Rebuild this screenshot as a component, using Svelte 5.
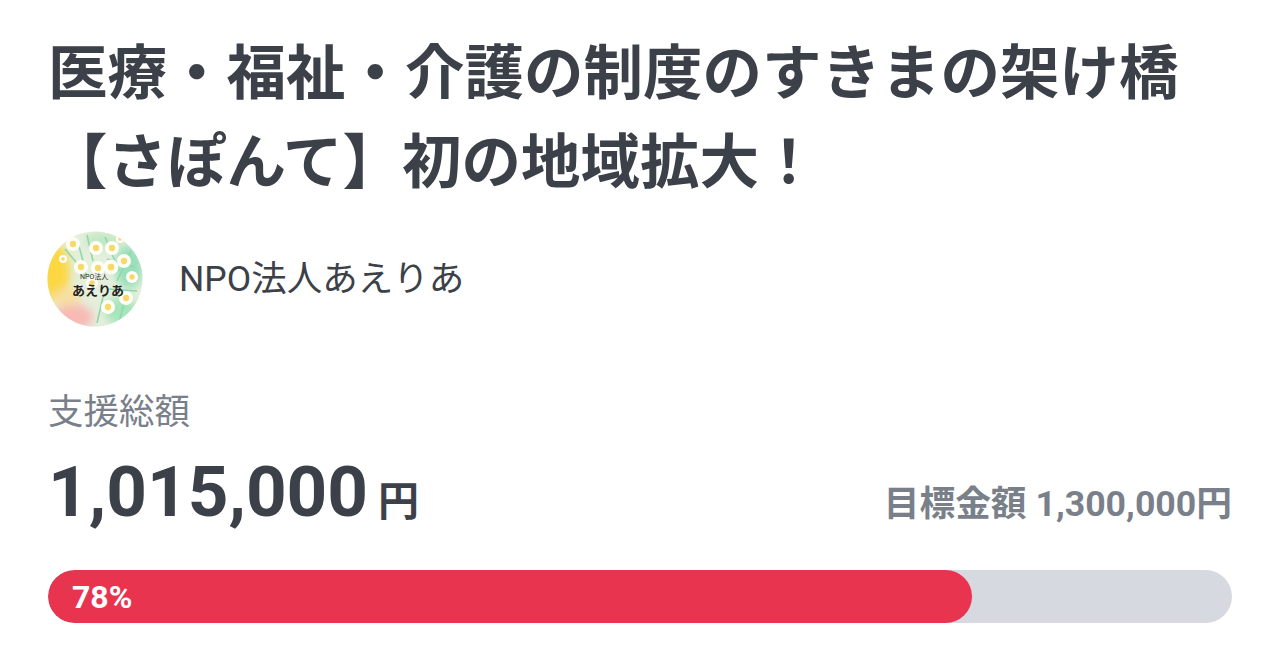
<script>
  const flowers = [[26,13,7],[49,17,7],[65,17,7],[77,30,7],[34,36,7],[51,37,7],[64,36,7.5],[85,46,6],[45,52,6],[79,67,7],[61,76,7],[73,8,4],[16,28,4]];
  const leaves = ["M40 4 L46 30","M58 6 L72 40","M84 20 L70 50","M90 60 L62 58","M72 92 L80 60","M50 92 L56 66","M18 18 L40 44","M30 8 L36 30","M88 36 L60 28"];
</script>

<main class="page">
  <h1>医療・福祉・介護の制度のすきまの架け橋<br />【さぽんて】初の地域拡大！</h1>
  <div class="org">
    <div class="avatar">
      <svg viewBox="0 0 96 96" width="96" height="96">
        <defs>
          <clipPath id="c"><circle cx="48" cy="48" r="47.5" /></clipPath>
          <filter id="b" x="-30%" y="-30%" width="160%" height="160%"><feGaussianBlur stdDeviation="4" /></filter>
          <filter id="s"><feGaussianBlur stdDeviation="0.6" /></filter>
        </defs>
        <g clip-path="url(#c)">
          <rect width="96" height="96" fill="#e4efdc" />
          <g filter="url(#b)">
            <ellipse cx="8" cy="42" rx="15" ry="30" fill="#fcd742" />
            <ellipse cx="26" cy="86" rx="20" ry="13" fill="#f8b9b4" />
            <ellipse cx="20" cy="66" rx="14" ry="9" fill="#f8dfa0" />
            <ellipse cx="82" cy="36" rx="14" ry="22" fill="#98dfba" />
            <ellipse cx="74" cy="80" rx="16" ry="14" fill="#a4e5bb" />
            <ellipse cx="56" cy="10" rx="18" ry="8" fill="#bfe8c2" />
          </g>
          <g filter="url(#s)">
            {#each leaves as d}
              <path {d} stroke="#8fd8ae" stroke-width="1.6" fill="none" />
            {/each}
            {#each flowers as [x, y, r]}
              <circle cx={x} cy={y} r={r} fill="#fffef6" />
              <circle cx={x} cy={y} r={r * 0.45} fill="#f7d868" />
            {/each}
          </g>
        </g>
      </svg>
      <span class="logo-small">NPO法人</span>
      <span class="logo-big">あえりあ</span>
    </div>
    <span class="org-name">NPO法人あえりあ</span>
  </div>
  <div class="label">支援総額</div>
  <div class="amounts">
    <div class="total"><strong>1,015,000</strong><span>円</span></div>
    <div class="goal">目標金額 1,300,000円</div>
  </div>
  <div class="track">
    <div class="fill" style="width: 78%"><span>78%</span></div>
  </div>
</main>

<style>
  :global(body) { margin: 0; background: #fff; }
  .page {
    box-sizing: border-box;
    width: 1280px;
    height: 670px;
    padding: 30px 48px 0;
    color: #3c4149;
    font-family: Roboto, "Noto Sans CJK JP", sans-serif;
    overflow: hidden;
  }
  h1 {
    margin: 0;
    font-size: 59.5px;
    line-height: 89px;
    font-weight: 700;
    white-space: nowrap;
  }
  .org {
    display: flex;
    align-items: center;
    gap: 36px;
    margin-top: 23px;
  }
  .avatar {
    position: relative;
    width: 96px;
    height: 96px;
    flex: none;
    margin-left: -1px;
  }
  .avatar svg { display: block; }
  .logo-small {
    position: absolute;
    left: 33px;
    top: 41px;
    font-size: 7px;
    line-height: 10px;
    color: #333;
    white-space: nowrap;
  }
  .logo-big {
    position: absolute;
    left: 25px;
    top: 51px;
    font-size: 13px;
    line-height: 18px;
    font-weight: 700;
    color: #222;
    white-space: nowrap;
  }
  .org-name { font-size: 35.5px; font-weight: 400; padding-bottom: 8px; }
  .label {
    margin-top: 61px;
    font-size: 35.5px;
    line-height: 48px;
    color: #7a808a;
  }
  .amounts {
    display: flex;
    justify-content: space-between;
    align-items: baseline;
    margin-top: 14px;
  }
  .total strong { font-size: 71px; font-weight: 700; }
  .total span { font-size: 41px; font-weight: 700; margin-left: 10px; }
  .goal { font-size: 35.7px; font-weight: 700; color: #7a808a; }
  .track {
    margin-top: 37px;
    height: 53px;
    width: 1184px;
    border-radius: 27px;
    background: #d6d9df;
    overflow: hidden;
  }
  .fill {
    height: 100%;
    background: #e8344f;
    border-radius: 27px;
    display: flex;
    align-items: center;
    box-sizing: border-box;
    padding-left: 24px;
    color: #fff;
    font-size: 32px;
    font-weight: 700;
  }
</style>
